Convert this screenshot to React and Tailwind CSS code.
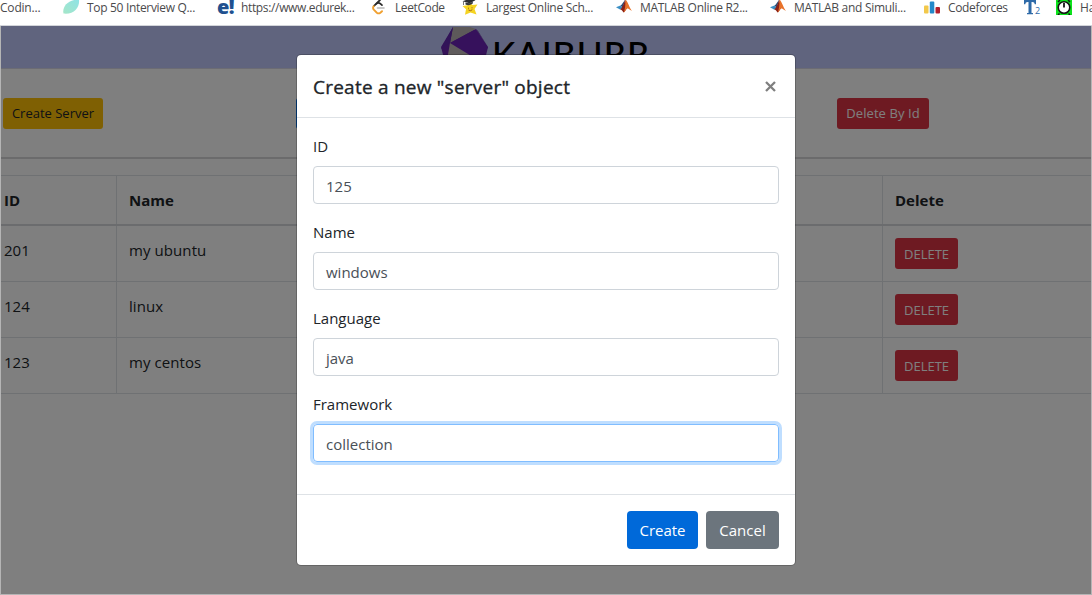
const ROWS = [
  { id: "201", name: "my ubuntu" },
  { id: "124", name: "linux" },
  { id: "123", name: "my centos" },
];

const FIELDS = [
  { label: "ID", value: "125" },
  { label: "Name", value: "windows" },
  { label: "Language", value: "java" },
  { label: "Framework", value: "collection", focused: true },
];

function LeafIcon() {
  return (
    <svg width="17" height="16" viewBox="0 0 17 16" className="-mt-px block">
      <defs>
        <linearGradient id="leaf" x1="0" y1="1" x2="1" y2="0">
          <stop offset="0" stopColor="#a5e6c8" />
          <stop offset="1" stopColor="#8fe3e6" />
        </linearGradient>
      </defs>
      <path d="M0.500 14.500C-1 7.500 5 0.500 16 0.500C17 8 11 15.800 0.500 14.500Z" fill="url(#leaf)" />
    </svg>
  );
}

function LeetCodeIcon() {
  return (
    <svg width="16" height="16" viewBox="0 0 16 16" fill="none" strokeLinecap="round" className="-mt-px block">
      <path d="M9 1L2.800 7.200" stroke="#2b2b2b" strokeWidth="1.800" />
      <path d="M2.800 7.200Q1.300 9 2.800 10.700L5.800 13.700Q7.600 15 9.400 13.700L11 12.200" stroke="#f0a030" strokeWidth="1.900" />
      <path d="M5.500 4.600Q7.500 3 9.300 4.600L11 6.200" stroke="#2b2b2b" strokeWidth="1.700" />
      <path d="M6.500 9H13" stroke="#b8b8b8" strokeWidth="1.600" />
    </svg>
  );
}

function StarIcon() {
  return (
    <svg width="16" height="16" viewBox="0 0 16 16" className="-mt-px block">
      <path d="M8 2.500L10.300 6L15.500 5.500L12.500 10L14.500 15.500L8.500 13.500L3 15.800L4 10.300L0.500 7L5.600 6.300Z" fill="#f5d321" />
      <path d="M0.500 2.200L7 0L13.500 1.200L7.500 4.200Z" fill="#2a2d33" />
      <path d="M3.500 3.500V5.500Q7 7.200 10.800 4.500V2.500L7.500 4.300Z" fill="#373a40" />
      <path d="M1.500 2.500V6" stroke="#555" strokeWidth="0.800" />
      <path d="M6 9.200H7M9.500 8.800H10.500M6.500 11Q8.500 12.500 10.300 10.700" stroke="#a0671a" fill="none" />
    </svg>
  );
}

function MatlabIcon() {
  return (
    <svg width="16" height="14" viewBox="0 0 16 14" className="-mt-px block">
      <path d="M0 8.200L4.500 6.500L6.800 8.700L4 10.500Z" fill="#3b8fc4" />
      <path d="M4.500 6.500C6 6 7.500 2.500 9.300 0.500L6.800 8.700Z" fill="#2d4f78" />
      <path d="M9.300 0.300C8 4 6.500 9 4 10.500C6 10 7 13.500 7.800 13.500C9 13 9.500 10.500 11 9.500Z" fill="#8c2318" />
      <path d="M9.300 0.300C11.500 2 13.500 9 16 11.800C14 11 12.500 9 11 9.500C9.500 10.500 9 13 7.800 13.500C9.500 9 9.500 4 9.300 0.300Z" fill="#e8722a" />
    </svg>
  );
}

function BarsIcon() {
  return (
    <svg width="16" height="13" viewBox="0 0 16 13" className="mt-px block">
      <rect x="0" y="4.500" width="4.500" height="8" rx="1" fill="#f2c84b" />
      <rect x="5.800" y="0.500" width="4.500" height="12" rx="1" fill="#2389c9" />
      <rect x="11.500" y="6" width="4.500" height="6.500" rx="1" fill="#b3202c" />
    </svg>
  );
}

function ClockIcon() {
  return (
    <svg width="16" height="16" viewBox="0 0 16 16" className="-mt-px block">
      <rect width="16" height="16" fill="#0be51b" />
      <circle cx="8" cy="8.500" r="5.800" fill="#fff" stroke="#141414" strokeWidth="1.600" />
      <path d="M2 3L4 1M14 3L12 1M3.500 14.500L2 16M12.500 14.500L14 16" stroke="#141414" strokeWidth="1.500" />
      <path d="M8 4V8.500" stroke="#141414" strokeWidth="1.800" />
    </svg>
  );
}

function Bookmark({ icon, label, width, spacing = "" }) {
  return (
    <div className={`flex shrink-0 items-start ${width}`}>
      <span className="w-[24px] shrink-0">{icon}</span>
      <span className={`whitespace-nowrap ${spacing}`}>{label}</span>
    </div>
  );
}

function Bookmarks() {
  return (
    <div className="h-[26px] overflow-hidden border-b border-[#d3d5da] bg-white">
      <div className="flex items-start text-[12px] leading-[15px] text-[#4a4a4c]">
        <span className="w-[63px] shrink-0 tracking-[-0.200px]">Codin...</span>
        <Bookmark width="w-[154px]" icon={<LeafIcon />} label="Top 50 Interview Q..." spacing="tracking-[-0.320px]" />
        <Bookmark
          width="w-[154px]"
          icon={<span className="-mt-[4px] block text-[20px] font-extrabold leading-[22px] tracking-[-0.500px] text-[#20508f]">e!</span>}
          label="https://www.edurek..."
          spacing="tracking-[-0.350px]"
        />
        <Bookmark width="w-[91px]" icon={<LeetCodeIcon />} label="LeetCode" spacing="tracking-[-0.400px]" />
        <Bookmark width="w-[154px]" icon={<StarIcon />} label="Largest Online Sch..." spacing="tracking-[-0.300px]" />
        <Bookmark width="w-[154px]" icon={<MatlabIcon />} label="MATLAB Online R2..." spacing="tracking-[-0.300px]" />
        <Bookmark width="w-[154px]" icon={<MatlabIcon />} label="MATLAB and Simuli..." spacing="tracking-[-0.300px]" />
        <Bookmark width="w-[100px]" icon={<BarsIcon />} label="Codeforces" spacing="tracking-[-0.350px]" />
        <div className="flex w-[32px] shrink-0 text-[#2e6aa8]">
          <svg width="12" height="16" viewBox="0 0 12 16" className="-mt-px block"><path d="M0 1H12V5.200H10.800Q10.500 3 8.500 3H7.500V14H9V15.200H3V14H4.500V3H3.500Q1.500 3 1.200 5.200H0Z" fill="#2e6aa8" /></svg>
          <span className="-ml-px pt-[6px] text-[9px] leading-[10px]">2</span>
        </div>
        <Bookmark width="w-[60px]" icon={<ClockIcon />} label="Hack" />
      </div>
    </div>
  );
}

function Logo() {
  return (
    <div className="flex h-[43px] items-start overflow-hidden border-b border-[#d8d8e8] bg-[#c1c8fd] pl-[441px]">
      <svg width="48" height="54" viewBox="0 0 48 54" className="shrink-0">
        <path d="M12 1L29 3L36 5L47 21L42 42L22 50L5 40L0 21Z" fill="#6a24b0" />
        <path d="M12 1L29 1L35 3L9 17Z" fill="#bab2b4" />
        <path d="M12 1L9 17L0 23Z" fill="#6228b0" />
        <path d="M35 3L37 5L47 21Z" fill="#55288c" />
        <path d="M35 3L47 22L32 31L9 17Z" fill="#6c22b8" />
        <path d="M9 17L32 31L40 45L5 40Z" fill="#c0b8ba" />
      </svg>
      <span className="ml-[3px] mt-[6px] whitespace-nowrap font-['Lato',sans-serif] text-[35px] font-medium leading-[42px] tracking-[1.200px] text-black">KAIBURR</span>
    </div>
  );
}

function ServerPage() {
  return (
    <div className="h-[569px] overflow-hidden bg-white">
      <Logo />
      <div className="flex h-[88px] items-start pl-[3px] pt-[29px] text-[13px]">
        <button className="h-[31px] w-[100px] rounded-[3px] bg-[#ffc107] text-[#212529]">Create Server</button>
        <button className="ml-[193px] h-[31px] w-[120px] rounded-[3px] bg-[#007bff] text-white">Get Server</button>
        <button className="ml-[421px] h-[31px] w-[92px] rounded-[3px] bg-[#dc3545] tracking-[0.080px] text-white">Delete By Id</button>
      </div>
      <div className="mb-[16px] h-[2px] bg-[#d6d6d8]" />
      <div className="grid h-[51px] grid-cols-[116px_382px_384px_1fr] border-b-2 border-t border-b-[#d6d9dc] border-t-[#dee2e6] text-[15px] font-bold leading-[24px] text-[#212529]">
        <div className="pl-[4px] pt-[12px]">ID</div>
        <div className="border-l border-[#dee2e6] pl-[12px] pt-[12px]">Name</div>
        <div className="border-l border-[#dee2e6] pl-[12px] pt-[12px]">Language</div>
        <div className="border-l border-[#dee2e6] pl-[12px] pt-[12px]">Delete</div>
      </div>
      {ROWS.map((row) => (
        <div key={row.id} className="grid h-[56px] grid-cols-[116px_382px_384px_1fr] border-b border-[#dee2e6] text-[15px] leading-[24px] text-[#212529]">
          <div className="pl-[4px] pt-[12px]">{row.id}</div>
          <div className="border-l border-[#dee2e6] pl-[12px] pt-[12px] tracking-[0.080px]">{row.name}</div>
          <div className="border-l border-[#dee2e6]" />
          <div className="border-l border-[#dee2e6] pl-[12px] pt-[12px]">
            <button className="block h-[31px] w-[63px] rounded-[3px] bg-[#dc3545] text-[13px] text-white">DELETE</button>
          </div>
        </div>
      ))}
    </div>
  );
}

function Modal() {
  return (
    <div className="w-[500px] rounded-[5px] border border-black/20 bg-white bg-clip-padding text-[15px] text-[#212529]">
      <div className="flex h-[63px] items-center justify-between border-b border-[#dee2e6] pl-[16px] pr-[18px]">
        <h5 className="pt-[2px] text-[19px] font-medium leading-[30px] tracking-[0.230px] [-webkit-text-stroke:0.350px_#212529]">Create a new "server" object</h5>
        <button className="flex h-[20px] w-[13px] items-center justify-center" aria-label="Close">
          <svg width="11" height="11" viewBox="0 0 11 11"><path d="M1 1L10 10M10 1L1 10" stroke="#7f7f7f" strokeWidth="2.300" /></svg>
        </button>
      </div>
      <div className="p-[16px]">
        {FIELDS.map((field) => (
          <div key={field.label} className="mb-[16px]">
            <div className="mb-[8px] h-[24px] leading-[24px]">{field.label}</div>
            <div
              className={
                field.focused
                  ? "flex h-[38px] items-center rounded-[4px] border border-[#80bdff] pl-[12px] pt-[2px] text-[#495057] shadow-[0_0_0_3px_#bfdeff]"
                  : "flex h-[38px] items-center rounded-[4px] border border-[#ced4da] pl-[12px] pt-[2px] text-[#495057]"
              }
            >
              {field.value}
            </div>
          </div>
        ))}
      </div>
      <div className="flex h-[71px] justify-end gap-[8px] border-t border-[#dee2e6] p-[16px] text-white">
        <button className="h-[38px] w-[71px] rounded-[4px] bg-[#0069d9]">Create</button>
        <button className="h-[38px] w-[73px] rounded-[4px] bg-[#6c757d]">Cancel</button>
      </div>
    </div>
  );
}

export default function App() {
  return (
    <div className="h-[595px] w-[1092px] overflow-hidden bg-white font-['Open_Sans','Noto_Sans',sans-serif]">
      <Bookmarks />
      <div className="relative">
        <ServerPage />
        <div className="absolute inset-0 flex items-start justify-center border-x border-b border-[#b5b5b5] bg-black/50 pt-[28px]">
          <Modal />
        </div>
      </div>
    </div>
  );
}
